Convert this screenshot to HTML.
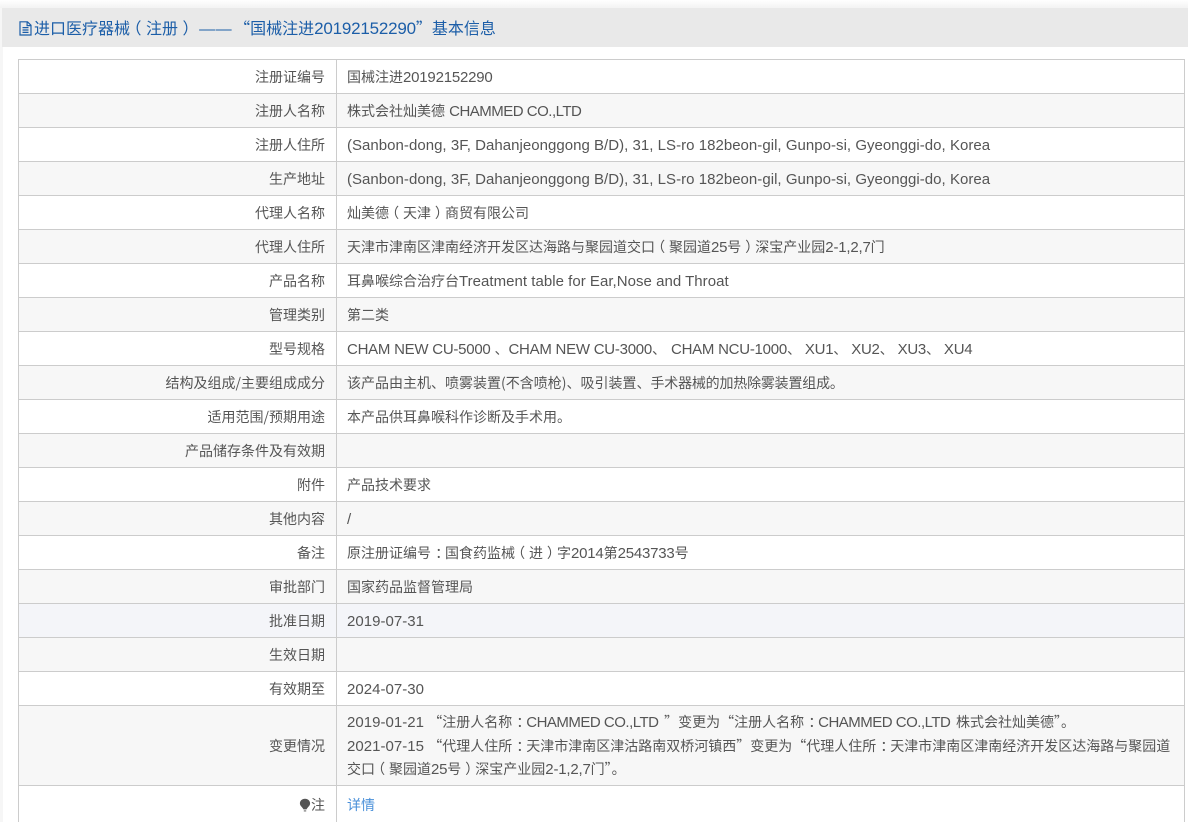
<!DOCTYPE html>
<html lang="zh"><head><meta charset="utf-8"><title>基本信息</title>
<style>
html,body{margin:0;padding:0;background:#fff;width:1188px;height:822px;overflow:hidden}
body{font-family:"Noto Sans CJK SC",sans-serif;font-size:14px;color:#555;position:relative}
i{font-family:"Liberation Sans",sans-serif;font-style:normal;font-size:15px;letter-spacing:.03px}
i.n{letter-spacing:-.2px}
i.k{letter-spacing:-.25px}
i.m{letter-spacing:-.5px}
i.x{margin-right:2px}
b{font-weight:normal;position:relative}
b.o{left:-.28em}
b.e{left:.28em}
b.c{left:.3em}
#top{position:absolute;left:0;top:0;width:1188px;height:8px;background:linear-gradient(#fff,#f3f3f3)}
#lb{position:absolute;left:0;top:8px;width:3px;height:814px;background:#f6f6f6}
#hd{position:absolute;left:2px;top:8px;width:1186px;height:39px;background:#e9e9e9}
#hd span{position:absolute;left:32px;top:9px;line-height:21px;font-size:16px;color:#1c5ea8;white-space:nowrap}
#hd span i{font-size:17px;letter-spacing:-.2px}
#hd .d{display:inline-block;width:35px;margin-left:5px;font-size:16px;letter-spacing:.5px}
#hd svg{position:absolute;left:17px;top:13px}
#t{position:absolute;left:18px;top:59px;width:1167px;border-top:1px solid #ccc;border-left:1px solid #ccc;border-right:1px solid #ccc;box-sizing:border-box}
.r{display:flex;height:34px;box-sizing:border-box;border-bottom:1px solid #ccc;background:#fff}
.r.g{background:#f7f7f7}
.r.b{background:#f4f5f9}
.l{width:318px;box-sizing:border-box;border-right:1px solid #ccc;text-align:right;padding-right:11px;line-height:35px;white-space:nowrap;flex:none}
.v{padding-left:10px;line-height:35px;white-space:nowrap;flex:1}
.tall{height:80px}
.tall .l{line-height:81px}
.tall .v{line-height:23.5px;padding-top:5px;box-sizing:border-box}
.last{height:37px;border-bottom-color:#e2e2e2}
.last .l,.last .v{line-height:38px}
a{color:#4a90d9;text-decoration:none}
</style></head><body>
<div id="top"></div><div id="lb"></div>
<div id="hd"><svg width="13" height="15" viewBox="0 0 13 15" fill="none" stroke="#1c5ea8" stroke-width="1.2"><path d="M1 .8H8.500L12 4.300V14H1ZM8.100 1V4.600H11.800M3.500 6.600H9.500M3.500 9H9.500M3.500 11.400H9.500"/></svg><span>进口医疗器械<b class="o">（</b>注册<b class="e">）</b><i class="d">——</i>“国械注进<i>20192152290</i>”基本信息</span></div>
<div id="t">
<div class="r"><div class="l">注册证编号</div><div class="v">国械注进<i class="n">20192152290</i></div></div>
<div class="r g"><div class="l">注册人名称</div><div class="v">株式会社灿美德 <i class="m" style="margin-left:1px">CHAMMED CO.,LTD</i></div></div>
<div class="r"><div class="l">注册人住所</div><div class="v"><i>(Sanbon-dong, 3F, Dahanjeonggong B/D), 31, LS-ro 182beon-gil, Gunpo-si, Gyeonggi-do, Korea</i></div></div>
<div class="r g"><div class="l">生产地址</div><div class="v"><i>(Sanbon-dong, 3F, Dahanjeonggong B/D), 31, LS-ro 182beon-gil, Gunpo-si, Gyeonggi-do, Korea</i></div></div>
<div class="r"><div class="l">代理人名称</div><div class="v">灿美德<b class="o">（</b>天津<b class="e">）</b>商贸有限公司</div></div>
<div class="r g"><div class="l">代理人住所</div><div class="v">天津市津南区津南经济开发区达海路与聚园道交口<b class="o">（</b>聚园道<i class="n">25</i>号<b class="e">）</b>深宝产业园<i class="n">2-1,2,7</i>门</div></div>
<div class="r"><div class="l">产品名称</div><div class="v">耳鼻喉综合治疗台<i>Treatment table for Ear,Nose and Throat</i></div></div>
<div class="r g"><div class="l">管理类别</div><div class="v">第二类</div></div>
<div class="r"><div class="l">型号规格</div><div class="v"><i class="k">CHAM NEW CU-5000 </i>、<i class="k">CHAM NEW CU-3000</i>、<i class="k" style="margin-left:5px">CHAM NCU-1000</i>、<i class="k"> XU1</i>、<i class="k"> XU2</i>、<i class="k"> XU3</i>、<i class="k"> XU4</i></div></div>
<div class="r g"><div class="l">结构及组成/主要组成成分</div><div class="v">该产品由主机、喷雾装置(不含喷枪)、吸引装置、<span style="letter-spacing:-.2px">手术器械的加热除雾装置组成</span>。</div></div>
<div class="r"><div class="l">适用范围/预期用途</div><div class="v">本产品供耳鼻喉科作诊断及手术用。</div></div>
<div class="r g"><div class="l">产品储存条件及有效期</div><div class="v"></div></div>
<div class="r"><div class="l">附件</div><div class="v">产品技术要求</div></div>
<div class="r g"><div class="l">其他内容</div><div class="v"><i>/</i></div></div>
<div class="r"><div class="l">备注</div><div class="v">原注册证编号<b class="c">：</b>国食药监械<b class="o">（</b>进<b class="e">）</b>字<i class="n">2014</i>第<i class="n">2543733</i>号</div></div>
<div class="r g"><div class="l">审批部门</div><div class="v">国家药品监督管理局</div></div>
<div class="r b"><div class="l">批准日期</div><div class="v"><i>2019-07-31</i></div></div>
<div class="r g"><div class="l">生效日期</div><div class="v"></div></div>
<div class="r"><div class="l">有效期至</div><div class="v"><i>2024-07-30</i></div></div>
<div class="r g tall"><div class="l">变更情况</div><div class="v"><i>2019-01-21 </i>“注册人名称<b class="c">：</b><i class="m x">CHAMMED CO.,LTD </i>”变更为“注册人名称<b class="c">：</b><i class="m x">CHAMMED CO.,LTD </i>株式会社灿美德”。<br><i>2021-07-15 </i>“代理人住所<b class="c">：</b>天津市津南区津沽路南双桥河镇西”变更为“代理人住所<b class="c">：</b>天津市津南区津南经济开发区达海路与聚园道<br>交口<b class="o">（</b>聚园道<i class="n">25</i>号<b class="e">）</b>深宝产业园<i class="n">2-1,2,7</i>门”。</div></div>
<div class="r last"><div class="l"><svg width="12" height="14" viewBox="0 0 12 14" style="vertical-align:-2px"><path d="M6 .8C2.900 .8 .9 3 .9 5.400c0 2.400 2.300 3.600 3.600 6h3c1.300-2.400 3.600-3.600 3.600-6C11.100 3 9.100 .8 6 .8Z" fill="#555"/><path d="M4.800 12.300h2.400v1.200H4.800z" fill="#777"/></svg>注</div><div class="v"><a>详情</a></div></div>
</div>
</body></html>
